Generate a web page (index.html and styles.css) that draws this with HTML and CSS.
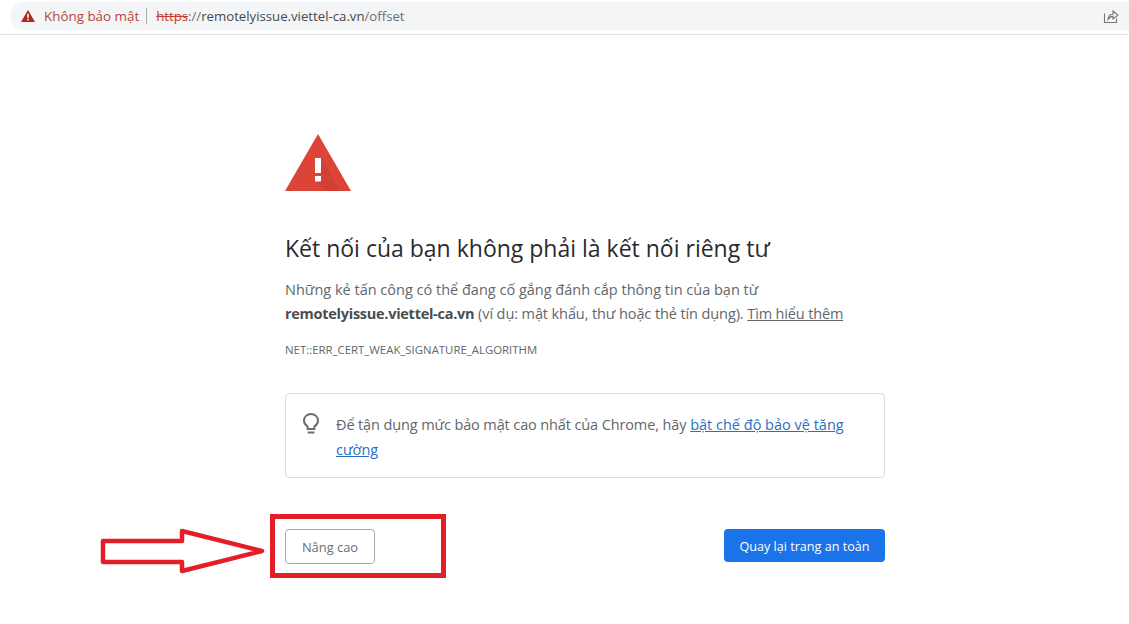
FILE: index.html
```html
<!DOCTYPE html>
<html lang="vi">
<head>
<meta charset="utf-8">
<title>Lỗi bảo mật</title>
<link rel="stylesheet" href="styles.css">
</head>
<body>
<header class="toolbar">
  <div class="omnibox">
    <svg class="warn-small" viewBox="0 0 14 12" width="14" height="12"><path d="M7 0 L14 12 H0 Z" fill="#b3261e"/><rect x="6.2" y="3.8" width="1.6" height="4" fill="#fff"/><rect x="6.2" y="8.8" width="1.6" height="1.6" fill="#fff"/></svg>
    <span class="not-secure">Không bảo mật</span>
    <span class="sep"></span>
    <span class="url"><s class="scheme">https</s><span class="host-pre">://</span><span class="host">remotelyissue.viettel-ca.vn</span><span class="path">/offset</span></span>
    <svg class="share" viewBox="0 0 16 16" width="16" height="16" fill="none" stroke="#777" stroke-width="1.1"><path d="M1.5 5.5 V14.5 H13.5 V10.5"/><path d="M5 11.5 C5.2 8 7.5 6.2 10 6.2 V3 L15 7.3 L10 11 V8.4 C8 8.3 6.3 9.5 5 11.5 Z"/></svg>
  </div>
</header>
<main class="content">
  <svg class="warn-big" viewBox="0 0 66 57" width="66" height="57"><path d="M33 0 L66 57 H0 Z" fill="#db4437"/><path d="M36 24 V39 L38 42 V47 H32 L42 57 H54 L40 30 Z" fill="#c5392e" opacity=".35"/><rect x="30" y="24" width="6" height="15" fill="#fff"/><rect x="30" y="42" width="6" height="5.5" fill="#fff"/></svg>
  <h1 class="title">Kết nối của bạn không phải là kết nối riêng tư</h1>
  <p class="desc">Những kẻ tấn công có thể đang cố gắng đánh cắp thông tin của bạn từ <strong class="domain">remotelyissue.viettel-ca.vn</strong> <span class="note">(ví dụ: mật khẩu, thư hoặc thẻ tín dụng).</span> <a class="learn" href="#">Tìm hiểu thêm</a></p>
  <p class="code">NET::ERR_CERT_WEAK_SIGNATURE_ALGORITHM</p>
  <section class="tip">
    <svg class="bulb" viewBox="0 0 18 24" width="18" height="24" fill="none" stroke="#6a6e72" stroke-width="2"><path d="M5.6 14.6 C3.4 13.2 2 11 2 8.6 C2 4.8 5.1 2 9 2 C12.9 2 16 4.8 16 8.6 C16 11 14.6 13.2 12.4 14.6 V17 H5.6 Z"/><path d="M5.6 20.5 H12.4"/></svg>
    <p class="tip-text"><span class="tip-lead">Để tận dụng mức bảo mật cao nhất của Chrome, hãy</span> <a class="tip-link" href="#">bật chế độ bảo vệ tăng cường</a></p>
  </section>
  <div class="actions">
    <button class="btn btn-adv">Nâng cao</button>
    <button class="btn btn-back">Quay lại trang an toàn</button>
  </div>
</main>
<svg class="annotation" viewBox="0 0 1129 624" width="1129" height="624" fill="none" stroke="#e41e26">
  <rect x="272.5" y="516.5" width="171" height="59" stroke-width="5"/>
  <path d="M103 541 H182 V531 L262 551 L182 571 V562 H103 Z" stroke-width="4.5" stroke-linejoin="round"/>
</svg>
</body>
</html>
```
FILE: styles.css
```css
* { box-sizing: border-box; }
html, body { margin: 0; padding: 0; }
body {
  width: 1129px;
  height: 624px;
  background: #fff;
  overflow: hidden;
  position: relative;
  font-family: "Open Sans", "Noto Sans", sans-serif;
  color: #63676b;
}
.toolbar {
  height: 35px;
  padding: 2px 0 4px 10px;
  border-bottom: 1px solid #dfe1e5;
}
.omnibox {
  height: 28px;
  background: #f4f5f6;
  border-radius: 14px 0 0 14px;
  display: flex;
  align-items: center;
  padding-left: 11px;
  padding-right: 10px;
}
.warn-small { flex: none; margin-right: 9px; }
.not-secure { font-size: 13.4px; color: #b8443a; }
.sep { width: 1px; height: 16px; background: #a9a9a9; margin: 0 9px 0 7px; }
.url { font-size: 13.2px; color: #6a6f74; flex: 1; }
.scheme { color: #c5392e; }
.host { color: #44484b; }
.content {
  width: 600px;
  margin: 99px 0 0 285px;
}
.warn-big { display: block; }
.title {
  margin: 42px 0 0;
  font-size: 23px;
  line-height: 30px;
  font-weight: 400;
  color: #2a2b2e;
}
.desc {
  margin: 15px 0 0;
  font-size: 14.5px;
  line-height: 24px;
  width: 590px;
}
.domain { color: #4a4d50; white-space: nowrap; letter-spacing: -0.27px; }
.note { letter-spacing: -0.1px; }
.learn { color: #63676b; letter-spacing: -0.15px; }
.code {
  margin: 16px 0 0;
  font-size: 11.4px;
  line-height: 16px;
}
.tip {
  margin-top: 35px;
  height: 85px;
  border: 1px solid #dadce0;
  border-radius: 4px;
  display: flex;
  padding: 18px 20px 0 16px;
}
.bulb { flex: none; margin-right: 16px; }
.tip-text {
  margin: 0;
  font-size: 14.5px;
  line-height: 25px;
}
.tip-lead { letter-spacing: -0.12px; }
.tip-link { color: #2a6fc4; }
.actions {
  margin-top: 51px;
  display: flex;
  justify-content: space-between;
  align-items: flex-start;
}
.btn {
  font-family: inherit;
  height: 33px;
  border-radius: 4px;
  padding: 0;
}
.btn-adv {
  width: 90px;
  height: 35px;
  font-size: 12.9px;
  background: #fff;
  border: 1px solid #a8a8a8;
  color: #6b6f73;
}
.btn-back {
  width: 161px;
  padding-top: 2px;
  font-size: 12.6px;
  background: #1a73e8;
  border: 0;
  color: #fff;
  font-weight: 500;
}
.annotation {
  position: absolute;
  left: 0;
  top: 0;
  pointer-events: none;
}
```
